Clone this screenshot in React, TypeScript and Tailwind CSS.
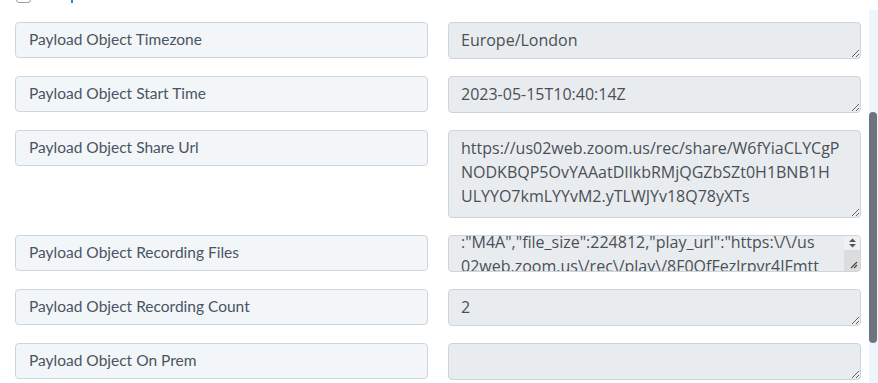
import React from 'react';

const rows = [
  { label: 'Payload Object Timezone', value: 'Europe/London', h: 'h-[37px]' },
  { label: 'Payload Object Start Time', value: '2023-05-15T10:40:14Z', h: 'h-[37px]' },
  {
    label: 'Payload Object Share Url',
    value:
      'https://us02web.zoom.us/rec/share/W6fYiaCLYCgP\nNODKBQP5OvYAAatDIlkbRMjQGZbSZt0H1BNB1H\nULYYO7kmLYYvM2.yTLWJYv18Q78yXTs',
    h: 'h-[88px]',
  },
  {
    label: 'Payload Object Recording Files',
    value:
      ':"M4A","file_size":224812,"play_url":"https:\\/\\/us\n02web.zoom.us\\/rec\\/play\\/8F0OfFezlrpvr4JFmtt\nKx3Qm2aR8uLpZ0wYc","download_url":"https:\\/\\/us02web.zoom.us\\/rec\\/download"}]',
    h: 'h-[37px]',
    scroll: true,
  },
  { label: 'Payload Object Recording Count', value: '2', h: 'h-[37px]' },
  { label: 'Payload Object On Prem', value: '', h: 'h-[37px]' },
];

function ScrollStub() {
  return (
    <div className="absolute right-[1px] top-[1px] bottom-[1px] flex w-[16px] flex-col overflow-hidden rounded-br-[3px] rounded-tr-[3px]">
      <div className="flex h-[14px] flex-col items-center justify-center bg-[#eef1f4]">
        <svg width="9" height="10" viewBox="0 0 9 10">
          <path d="M4.5 0.5 L8 4 L1 4 Z" fill="#555" />
          <path d="M1 6 L8 6 L4.5 9.5 Z" fill="#555" />
        </svg>
      </div>
      <div className="flex flex-1 items-end justify-end bg-[#dcdcdc] pb-[2px] pr-[2px]">
        <svg width="9" height="9" viewBox="0 0 9 9">
          <path d="M8 2 L2 8 M8 5 L5 8" stroke="#444" strokeWidth="1.1" />
        </svg>
      </div>
    </div>
  );
}

function App() {
  return (
    <div className="relative h-[383px] w-[878px] overflow-hidden bg-white">
      {/* checkbox peeking in from the row above */}
      <div className="absolute left-[16px] top-[-12px] h-[15px] w-[15px] rounded-[3px] border border-[#9aa1a9] bg-white" />
      <div className="absolute left-[71px] top-0 h-[3px] w-[2px] bg-[#1a8fd8]" />

      <div className="flex">
        <div className="flex w-[861px] flex-col gap-[17px] pl-[15px] pt-[22px]">
          {rows.map((r) => (
            <div key={r.label} className="grid grid-cols-[413px_413px] items-start gap-x-[20px]">
              <div
                className="flex h-[36px] items-center rounded-[4px] border border-[#cfd5dc] bg-[#f3f6f9] px-[13px] text-[15.5px] font-normal text-[#4a5462]"
                style={{ fontFamily: 'Lato, sans-serif' }}
              >
                {r.label}
              </div>
              <div className="relative">
                <textarea
                  readOnly
                  value={r.value}
                  ref={r.scroll ? (el) => { if (el) el.scrollTop = 11; } : undefined}
                  className={`${r.h} block w-[413px] rounded-[4px] border border-[#ced4da] bg-[#e9ecef] pl-[12px] pt-[5px] text-[16px] leading-[24px] text-[#495057] outline-none ${r.scroll ? 'resize-none overflow-hidden pr-[20px]' : 'pr-[12px]'}`}
                  style={{ fontFamily: '"Open Sans", sans-serif' }}
                />
                {r.scroll && <ScrollStub />}
              </div>
            </div>
          ))}
        </div>
        <div className="ml-[8px] mt-[10px] flex h-[373px] w-[9px] flex-col bg-[#eef5fd]">
          <div className="mt-[102px] h-[231px] w-[8px] rounded-full bg-[#6c757d]" />
        </div>
      </div>
    </div>
  );
}

export default App;
